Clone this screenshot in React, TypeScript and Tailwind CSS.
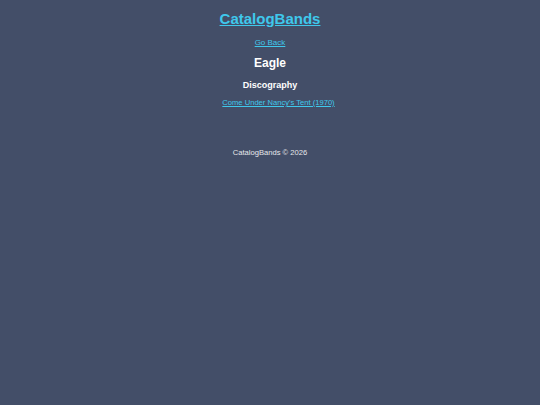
export default function App() {
  return (
    <div
      className="min-h-[405px] w-full bg-[#434e68] text-white text-center flex flex-col items-center leading-none"
      style={{ fontFamily: '"Liberation Sans", Arial, sans-serif' }}
    >
      <header className="pt-[9px]">
        <a href="#" className="text-[15px] font-bold underline text-[#3fc8ec] leading-[20px] block">
          CatalogBands
        </a>
      </header>
      <main className="flex flex-col items-center">
        <a href="#" className="mt-[9px] block text-[8px] underline text-[#3fc8ec] leading-[10px]">
          Go Back
        </a>
        <h1 className="mt-[8px] text-[12px] font-bold leading-[14px]">Eagle</h1>
        <h2 className="mt-[9px] text-[9px] font-bold leading-[12px]">Discography</h2>
        <ul className="mt-[7px] pl-[17px] flex flex-col items-center">
          <li className="leading-[10px]">
            <a href="#" className="block text-[7.6px] underline text-[#3fc8ec] leading-[10px]">
              Come Under Nancy's Tent (1970)
            </a>
          </li>
        </ul>
      </main>
      <footer className="mt-[40px] text-[7.6px] leading-[10px] text-[#e5e7eb]">CatalogBands © 2026</footer>
    </div>
  );
}
